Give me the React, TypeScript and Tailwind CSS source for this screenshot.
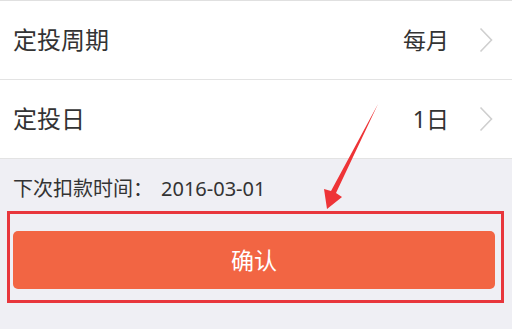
import React from 'react';

const Chevron: React.FC = () => (
  <svg width="14" height="26" viewBox="0 0 14 26" className="ml-[30px]">
    <path d="M1.5 1.5 L12.5 13 L1.5 24.5" fill="none" stroke="#cfcfcf" strokeWidth="1.6" />
  </svg>
);

const Row: React.FC<{ label: string; value: string }> = ({ label, value }) => (
  <div className="flex h-[79px] items-center justify-between border-b border-[#e3e3e3] bg-white pl-[13px] pr-[19px]">
    <span className="text-[24px] text-[#333333]">{label}</span>
    <div className="flex items-center">
      <span className="text-[23px] text-[#333333]">{value}</span>
      <Chevron />
    </div>
  </div>
);

const App: React.FC = () => {
  return (
    <div
      className="relative h-[329px] w-[512px] overflow-hidden bg-[#efeff4]"
      style={{ fontFamily: '"Noto Sans", "Noto Sans CJK SC", sans-serif' }}
    >
      <div className="border-t border-[#e0e0e0]">
        <Row label="定投周期" value="每月" />
        <Row label="定投日" value="1日" />
      </div>

      <div className="flex pl-[13px] pt-[18px] text-[20px] leading-[24px] text-[#333333]">
        <span>下次扣款时间：</span>
        <span className="ml-[8px]">2016-03-01</span>
      </div>

      <div className="ml-[7px] mt-[10px] w-[497px] border-[3px] border-[#e8363c] pb-[11px] pl-[3px] pr-[6px] pt-[17px]">
        <button
          type="button"
          className="flex h-[58px] w-full items-center justify-center rounded-[5px] bg-[#f26543] text-[23px] text-white"
        >
          确认
        </button>
      </div>

      {/* annotation arrow */}
      <svg className="absolute left-0 top-0" width="512" height="329" viewBox="0 0 512 329">
        <path d="M378 104 L336 193 L342 197 L327 209 L324 189 L331 191 Z" fill="#ee3437" />
      </svg>
    </div>
  );
};

export default App;
